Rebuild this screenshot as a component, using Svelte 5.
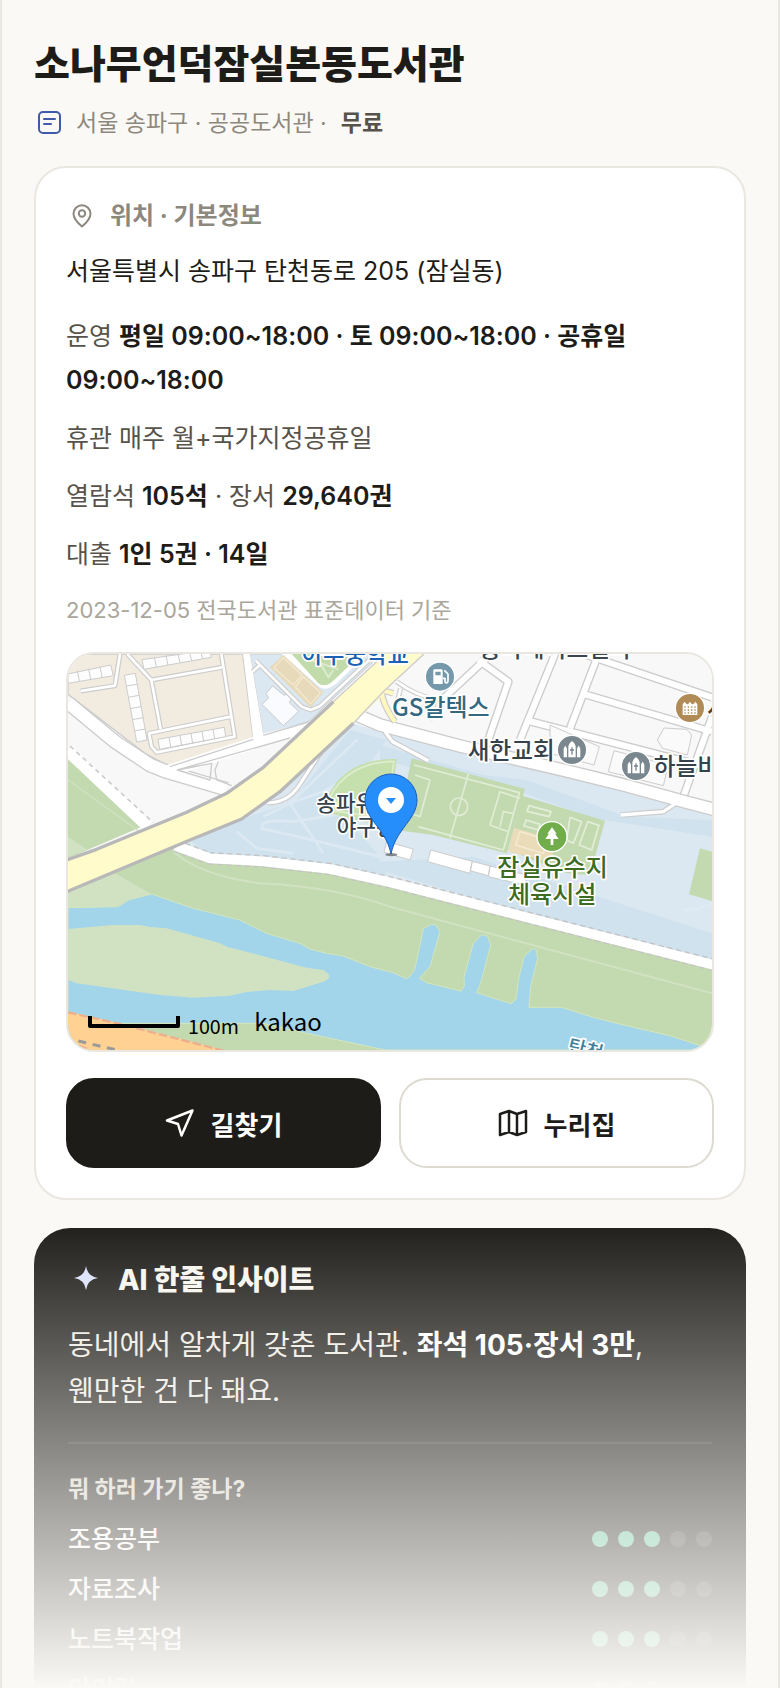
<script>
  const info = [
    [{ t: '운영 ' }, { b: '평일 09:00~18:00 · 토 09:00~18:00 · 공휴일 09:00~18:00' }],
    [{ t: '휴관 매주 월+국가지정공휴일' }],
    [{ t: '열람석 ' }, { b: '105석' }, { t: ' · 장서 ' }, { b: '29,640권' }],
    [{ t: '대출 ' }, { b: '1인 5권 · 14일' }]
  ];
  const uses = [
    { name: '조용공부', score: 3 },
    { name: '자료조사', score: 3 },
    { name: '노트북작업', score: 3 },
    { name: '아이랑', score: 3 }
  ];
  const places = [
    { x: 725, y: 70, size: 70, text: '아주중학교', color: '#1a63b4' },
    { x: 1258, y: 52, size: 71, text: '송파레이크빌라', color: '#3b454e' },
    { x: 996, y: 229, size: 72, text: 'GS칼텍스', color: '#34687f' },
    { x: 1223, y: 357, size: 71, text: '새한교회', color: '#36424b' },
    { x: 1781, y: 405, size: 71, text: '하늘비전', color: '#36424b' },
    { x: 1942, y: 228, size: 68, text: '사랑', color: '#5a4020' },
    { x: 769, y: 512, size: 64, text: '송파유수지', color: '#36424b' },
    { x: 830, y: 585, size: 64, text: '야구장', color: '#36424b' },
    { x: 1312, y: 708, size: 72, text: '잠실유수지', color: '#3d6b22' },
    { x: 1344, y: 789, size: 72, text: '체육시설', color: '#3d6b22' }
  ];
  const minorRoads = [
    'M180 42 L165 137 L62 153',
    'M202 42 L274 120 L302 268',
    'M274 120 L486 82',
    'M484 42 L524 290 L290 337 L275 320 L267 280 L512 230',
    'M577 95 L600 75 L588 62 M600 75 L725 200 L752 210 L780 198 L960 30',
    'M1010 125 Q1065 165 1125 178 L1110 240 M1022 145 L1010 190'
  ];
  const streets = [
    'M1140 185 L1290 45 M1255 60 L1345 125 L1285 300',
    'M1490 30 L1380 300',
    'M1620 30 L1530 265',
    'M1580 45 L1956 172',
    'M1565 160 L1956 275',
    'M1395 240 L1956 385',
    'M1956 230 L1870 470'
  ];
  const footprints = [
    'M24 102 L152 75 L160 107 L24 130Z M52 92 L58 123 M86 86 L92 117 M120 80 L126 112',
    'M246 59 L450 30 L454 52 L252 88Z M283 50 L289 82 M318 46 L324 76 M354 42 L360 69 M390 42 L395 62 M424 42 L428 57',
    'M193 106 L226 100 L261 300 L230 306Z M198 138 L232 133 M204 172 L237 166 M210 206 L243 200 M216 239 L249 233 M222 273 L256 267',
    'M294 298 L493 262 L497 290 L299 328Z M327 292 L332 322 M360 286 L365 316 M393 280 L398 310 M426 274 L431 304 M459 268 L464 297'
  ];
</script>

<main class="page">
  <header>
    <h1>소나무언덕잠실본동도서관</h1>
    <p class="meta">
      <svg class="badge" viewBox="0 0 24 24" aria-hidden="true">
        <rect x="1" y="1" width="21" height="21" rx="4" />
        <path d="M6 8h11M6 13h7" />
      </svg>
      <span>서울 송파구 · 공공도서관 ·</span>
      <strong>무료</strong>
    </p>
  </header>

  <section class="card">
    <h2>
      <svg class="place" viewBox="0 0 20 24" aria-hidden="true">
        <path d="M10 22.500C7 20 1.500 15 1.500 9.700a8.500 8.500 0 0 1 17 0C18.500 15 13 20 10 22.500Z" />
        <circle cx="10" cy="9.500" r="3.200" />
      </svg>
      위치 · 기본정보
    </h2>
    <p class="address">서울특별시 송파구 탄천동로 205 (잠실동)</p>
    <div class="info">
      {#each info as row}
        <p>{#each row as part}{#if part.b}<b>{part.b}</b>{:else}{part.t}{/if}{/each}</p>
      {/each}
    </div>
    <p class="source">2023-12-05 전국도서관 표준데이터 기준</p>

    <div class="map">
      <svg viewBox="24 42 1932 1188" preserveAspectRatio="xMidYMid slice" role="img" aria-label="지도">
        <rect x="24" y="42" width="1932" height="1188" fill="#f8f8f8" />
        <!-- housing blocks and school -->
        <path d="M24 42H548L580 298L330 380L255 340L24 163Z" fill="#f2ece0" stroke="#ccc" stroke-width="4" />
        <path d="M570 42H965L745 245L610 288Z" fill="#dbe8f1" stroke="#ccc" stroke-width="3" />
        <path d="M548 30L580 298L610 286L568 30Z" fill="#fff" />
        <path d="M24 188L165 305L270 375L320 395L500 448" fill="none" stroke="#ccc" stroke-width="45" />
        <path d="M24 188L165 305L270 375L320 395L500 448M320 395L610 300L760 262" fill="none" stroke="#fff" stroke-width="37" />
        <path d="M330 380L580 298M610 286L745 246M352 390L690 294M352 390L455 370L450 420ZM515 437L470 420L465 390L475 365" fill="none" stroke="#ccc" stroke-width="4" />
        <path d="M665 42L780 142Q800 155 830 130L920 42Z" fill="#fff" />
        <path d="M695 42L775 130Q795 145 820 122L905 42Z" fill="#c1dbab" />
        <path d="M725 50L835 88M765 42L805 112L820 90" fill="none" stroke="#dcebcf" stroke-width="6" />
        <path d="M670 45L790 157L752 203L630 82Z" fill="#e7dabb" />
        <path d="M670 53L726 105L700 135L642 83ZM730 110L782 158L752 191L706 141Z" fill="none" stroke="#f4e9d0" stroke-width="4" />
        <path d="M638 138L672 166L685 160L694 175L688 188L716 214L670 257L606 193L626 174L618 160Z" fill="#f9fbfe" stroke="#ccc" stroke-width="3" />
        <g fill="none" stroke-linejoin="round">
          {#each minorRoads as d}<path {d} stroke="#ccc" stroke-width="15" />{/each}
          {#each minorRoads as d}<path {d} stroke="#fff" stroke-width="8" />{/each}
          {#each footprints as d}<path {d} fill="#fdfdfd" stroke="#ccc" stroke-width="3" />{/each}
        </g>

        <!-- eastern streets -->
        <g fill="none">
          {#each streets as d}<path {d} stroke="#ccc" stroke-width="26" />{/each}
          {#each streets as d}<path {d} stroke="#fff" stroke-width="18" />{/each}
          <path d="M1470 255L1618 320L1602 375L1470 340ZM1662 332L1645 395L1810 437L1825 375ZM1812 264L1880 268L1895 285L1882 345L1808 325L1792 300Z" fill="#fafafa" stroke="#ccc" stroke-width="3" />
        </g>

        <!-- sports park -->
        <path d="M880 250L960 275L1240 340L1500 405L1956 525V970L1400 825L990 715L800 680L440 645L350 615L550 535L660 455Z" fill="#dbe8f1" />
        <path d="M690 490L870 270L980 300L930 370L790 450L950 640L980 705L800 680L440 645L390 600L550 535ZM960 315L1270 405L1400 420L1700 530L1956 540V590L1600 535L1380 455L960 360ZM1240 650L1956 880V960L1500 850L960 690V665Z" fill="#d0e2ee" />
        <path d="M893 298L690 490L610 530M690 490L860 430M690 490L790 640M850 520L700 545Q600 535 605 565L800 610L960 650M530 575L590 625L700 640" fill="none" stroke="#dce9f2" stroke-width="8" />
        <path d="M620 488Q680 490 715 440L790 325" fill="none" stroke="#ccc" stroke-width="16" />
        <path d="M620 488Q680 490 715 440L790 325" fill="none" stroke="#fff" stroke-width="9" />
        <path d="M800 480C830 400 900 355 1010 357L985 565L810 520Z" fill="#c5dfad" />
        <path d="M808 476C840 405 910 365 1002 364L975 535L815 512" fill="none" stroke="#deedd0" stroke-width="5" />
        <path d="M1055 355L1395 447L1340 640L1120 585L1010 570Z" fill="#c3d9b0" />
        <path d="M1062 375L1378 458L1330 630L1075 560M1225 402L1170 595M1065 405L1110 420L1080 530L1040 515M1380 475L1320 455L1290 555L1345 575M1358 520L1330 515L1320 560" fill="none" stroke="#e0edd5" stroke-width="5" />
        <circle cx="1197" cy="500" r="26" fill="none" stroke="#e0edd5" stroke-width="5" />
        <path d="M1387 467L1635 542L1590 705L1520 700L1345 630Z" fill="#c3d9b0" />
        <path d="M1407 497L1473 515L1467 530L1401 514ZM1398 540L1440 553L1436 570L1392 558ZM1530 532L1565 545L1540 610L1520 600ZM1583 545L1617 556L1595 630L1558 615Z" fill="none" stroke="#e3eed9" stroke-width="5" />
        <path d="M1362 563L1490 600L1470 665L1345 635Z" fill="#eadbb9" />
        <path d="M1380 575L1465 600L1450 640L1367 615Z" fill="none" stroke="#f5ebd5" stroke-width="4" />
        <path d="M980 605L1060 627L1050 660L972 637ZM1112 630L1237 664L1230 700L1103 665ZM1237 664L1290 678L1285 707L1230 692ZM1290 678L1400 705L1395 735L1285 710Z" fill="#fff" stroke="#ccc" stroke-width="3" />
        <path d="M1920 625L1956 635V783L1887 763Z" fill="#c3d9b0" />
        <path d="M1870 810L1915 805L1956 792" fill="none" stroke="#dfebf3" stroke-width="8" />
        <g fill="none">
          <path d="M975 275L998 305L1105 362M1682 525L1810 515L1855 485" stroke="#ccc" stroke-width="17" />
          <path d="M890 225L960 255L1200 318L1500 388L1700 437L1880 487L1970 510" stroke="#ccc" stroke-width="42" />
          <path d="M890 225L960 255L1200 318L1500 388L1700 437L1880 487L1970 510" stroke="#fff" stroke-width="34" />
          <path d="M975 275L998 305L1105 362M1682 525L1810 515L1855 485" stroke="#fff" stroke-width="10" />
        </g>

        <!-- riverside -->
        <path d="M24 355L245 560L24 655Z" fill="#c3d9b0" />
        <path d="M24 420L235 572" stroke="#d1e2c3" stroke-width="4" />
        <path d="M24 590L80 628L24 652Z" fill="#d1e2c3" />
        <path d="M24 333L262 558" stroke="#fff" stroke-width="36" />
        <path d="M30 318L280 548" stroke="#ccc" stroke-width="5" stroke-dasharray="14 12" />
        <path d="M24 755L340 615L450 655L810 690L990 730L1400 835L1956 985V1230H24Z" fill="#c3d9b0" />
        <path d="M24 755L165 700L275 762L205 795L24 810Z" fill="#d1e2c3" />
        <path d="M340 635Q420 705 600 730Q820 740 990 800L1956 1060" fill="none" stroke="#d1e2c3" stroke-width="6" />
        <path d="M345 617L450 655L610 664L810 687L990 727L1400 832L1970 977" fill="none" stroke="#c4c4c4" stroke-width="38" stroke-dasharray="16 11" />
        <path d="M345 617L450 655L610 664L810 687L990 727L1400 832L1970 977" fill="none" stroke="#fff" stroke-width="29" />
        <path d="M24 803L175 800L205 780L275 762L400 805L540 840L620 880L720 910L750 927L800 940L850 948L930 980L1000 998L1040 1016Q1060 1002 1066 980L1090 866L1115 852L1128 855L1140 875L1110 980L1078 1015L1100 1028L1203 1053L1213 1038L1212 1010L1240 910L1265 884L1283 888L1292 915L1262 1030L1250 1058L1353 1091L1368 1078L1375 1020L1392 950L1418 925L1428 928L1433 955L1412 1040L1407 1102H1505L1600 1132L1700 1157L1830 1187L1922 1217L1940 1230H24Z" fill="#a3d5ea" stroke="#d3e6bd" stroke-width="3" />
        <path d="M24 867L160 855H240L270 861L320 865L480 910L500 920L740 983L790 990Q808 1002 808 1010Q805 1018 790 1025L700 1053L630 1050L560 1056L510 1067L400 1073L300 1065L50 1030L24 1020Z" fill="#d1e2c3" />
        <path d="M180 1150H610L740 1180L985 1232H450Z" fill="#c3d9b0" stroke="#d3e6bd" stroke-width="3" />
        <path d="M24 1115L180 1150L490 1230H24Z" fill="#ffd294" />
        <path d="M24 1117L180 1152L490 1232M24 1205L90 1230" stroke="#eeaf8c" stroke-width="7" fill="none" stroke-dasharray="26 9" />
        <path d="M55 1203L170 1230" stroke="#999" stroke-width="9" stroke-dasharray="24 20" />

        <!-- main road -->
        <path d="M1000 160L965 150Q965 190 1005 245" fill="none" stroke="#ccc" stroke-width="20" />
        <path d="M1000 160L965 150Q965 190 1005 245" fill="none" stroke="#fff7bd" stroke-width="13" />
        <path d="M14 660L110 628L380 517L500 460L610 382L820 185L975 42H1092L975 150L955 180L880 250L660 455L545 537L390 600L14 760Z" fill="#fffbcb" />
        <path d="M820 185L975 42M1092 42L975 150L880 250" fill="none" stroke="#ccc" stroke-width="4" />
        <path d="M14 662L110 628L380 517L500 460L610 382L820 185M880 250L660 455L545 537L390 600L14 758" fill="none" stroke="#b8b8b8" stroke-width="10" />

        <g class="labels">
          {#each places as p}
            <text x={p.x} y={p.y} font-size={p.size} fill={p.color}>{p.text}</text>
          {/each}
          <text x="1520" y="1236" font-size="58" fill="#3d7f9c" transform="rotate(14 1520 1236)">탄천</text>
        </g>

        <!-- place markers -->
        <g stroke="#fff" stroke-width="4">
          <circle cx="1140" cy="110" r="44" fill="#7599ab" />
          <circle cx="1536" cy="330" r="44" fill="#7a878f" />
          <circle cx="1728" cy="378" r="44" fill="#7a878f" />
          <circle cx="1890" cy="204" r="44" fill="#b18b56" />
          <circle cx="1476" cy="590" r="45" fill="#72ad4c" />
        </g>
        <path d="M1120 92Q1120 88 1124 88H1144Q1148 88 1148 92V132H1120Z" fill="#fff" />
        <path d="M1126 95H1142V106H1126Z" fill="#7599ab" />
        <path d="M1148 115H1155V126Q1163 133 1164 122V102L1153 91" fill="none" stroke="#fff" stroke-width="5" />
        {#each [[1536, 330], [1728, 378]] as c}
          <g transform="translate({c[0]} {c[1]})">
            <path d="M-11 22V-12Q-8 -22 0 -27Q8 -22 11 -12V22ZM-25 22V-4Q-23 -10 -20 -13Q-17 -10 -15 -4V22ZM25 22V-4Q23 -10 20 -13Q17 -10 15 -4V22Z" fill="#fff" />
            <path d="M0 -8V14M-6 0H6" stroke="#7a878f" stroke-width="4" />
          </g>
        {/each}
        <path d="M1868 225V193L1874 185L1880 193H1884L1890 185L1896 193H1900L1906 185L1912 193V225Z" fill="#fff" />
        <path d="M1873 201H1909M1873 210H1909M1873 219H1909" stroke="#b18b56" stroke-width="4" stroke-dasharray="4 6" />
        <path d="M1476 562L1490 581H1485L1496 597H1480V615H1472V597H1456L1467 581H1462Z" fill="#fff" />

        <!-- library pin -->
        <ellipse cx="994" cy="644" rx="18" ry="5" fill="#555" opacity=".65" />
        <path d="M993 642C985 600 961 572 940 543C923 520 915 500 915 480A78 78 0 0 1 1071 480C1071 500 1063 520 1046 543C1025 572 1001 600 993 642Z" fill="#258efb" stroke="#1b5fbe" stroke-width="3" />
        <circle cx="993" cy="480" r="39" fill="#fff" />
        <path d="M978 474H1008L993 492Z" fill="#258efb" />

        <!-- scale -->
        <path d="M90 1128V1158H354V1128" fill="none" stroke="#000" stroke-width="12" />
        <text class="scale" x="384" y="1181" font-size="59">100m</text>
        <text class="brand" x="583" y="1174" font-size="72">kakao</text>
      </svg>
    </div>

    <div class="actions">
      <button class="primary" type="button">
        <svg viewBox="0 0 30 30" aria-hidden="true"><path d="M27.500 2.500L2 12.500L13 16L16.500 27.500Z" /></svg>
        길찾기
      </button>
      <button type="button">
        <svg viewBox="0 0 30 30" aria-hidden="true"><path d="M2 6L11 3L19 6L28 3V24L19 27L11 24L2 27ZM11 3V24M19 6V27" /></svg>
        누리집
      </button>
    </div>
  </section>

  <section class="insight">
    <h2>
      <svg viewBox="0 0 24 28" aria-hidden="true"><path d="M12 0Q13.500 10.500 24 12Q13.500 13.500 12 24Q10.500 13.500 0 12Q10.500 10.500 12 0Z" /></svg>
      AI 한줄 인사이트
    </h2>
    <p class="summary">동네에서 알차게 갖춘 도서관. <b>좌석 105·장서 3만</b>, 웬만한 건 다 돼요.</p>
    <hr />
    <h3>뭐 하러 가기 좋나?</h3>
    <ul>
      {#each uses as use}
        <li>
          <span>{use.name}</span>
          <span class="dots">{#each Array(5) as _, i}<i class:on={i < use.score}></i>{/each}</span>
        </li>
      {/each}
    </ul>
  </section>
  <div class="fade"></div>
</main>

<style>
  :global(body) {
    margin: 0;
    background: #faf9f6;
  }
  .page {
    position: relative;
    box-sizing: border-box;
    height: 100vh;
    overflow: hidden;
    padding: 38px 32px 0;
    border: solid #e9e7e1;
    border-width: 0 2px;
    background: #faf9f6;
    color: #1e1c18;
    font-family: Inter, 'Noto Sans CJK KR', sans-serif;
    word-break: keep-all;
  }
  h1, h2, h3, p, ul {
    margin: 0;
    padding: 0;
  }
  svg {
    flex: none;
    fill: none;
    stroke-linecap: round;
    stroke-linejoin: round;
  }
  h1 {
    font-size: 39px;
    line-height: 52px;
    font-weight: 800;
  }
  .meta {
    display: flex;
    align-items: center;
    gap: 14px;
    margin-top: 14px;
    padding-left: 4px;
    font-size: 23px;
    line-height: 38px;
    color: #8d887d;
  }
  .meta strong {
    color: #57534a;
    font-weight: 700;
  }
  .badge {
    width: 24px;
    height: 24px;
    stroke: #3f5bab;
    stroke-width: 2;
  }
  .card {
    margin-top: 24px;
    padding: 30px;
    border: 2px solid #eae7e1;
    border-radius: 32px;
    background: #fff;
  }
  .card h2 {
    display: flex;
    align-items: center;
    gap: 18px;
    padding-left: 6px;
    font-size: 24px;
    line-height: 36px;
    font-weight: 700;
    color: #8d887d;
  }
  .place {
    width: 20px;
    height: 24px;
    stroke: #8d887d;
    stroke-width: 2;
  }
  .address {
    margin-top: 16px;
    font-size: 25px;
    line-height: 42px;
  }
  .info {
    display: grid;
    gap: 14px;
    margin-top: 22px;
    font-size: 25px;
    line-height: 44px;
    color: #57534a;
  }
  .info b {
    font-weight: 600;
    color: #1e1c18;
  }
  .source {
    margin-top: 18px;
    font-size: 22px;
    line-height: 32px;
    color: #aaa69b;
  }
  .map {
    margin-top: 26px;
    height: 396px;
    border: 2px solid #eae7e1;
    border-radius: 28px;
    overflow: hidden;
  }
  .map svg {
    display: block;
    width: 100%;
    height: 100%;
    stroke-linecap: butt;
  }
  .labels text {
    font-family: 'Noto Sans CJK KR', sans-serif;
    font-weight: 500;
    stroke: #fff;
    stroke-width: 10;
    paint-order: stroke;
  }
  .scale,
  .brand {
    font-family: 'Noto Sans CJK KR', sans-serif;
    font-weight: 400;
    fill: #000;
  }
  .actions {
    display: grid;
    grid-template-columns: 1fr 1fr;
    gap: 18px;
    margin-top: 26px;
  }
  button {
    display: flex;
    align-items: center;
    justify-content: center;
    gap: 16px;
    height: 90px;
    border: 2px solid #dcdad1;
    border-radius: 28px;
    background: #fff;
    color: #1e1c18;
    font: 700 26px Inter, 'Noto Sans CJK KR', sans-serif;
  }
  button svg {
    width: 30px;
    height: 30px;
    stroke: currentColor;
    stroke-width: 2.5;
  }
  button.primary {
    border-color: #1e1c18;
    background: #1e1c18;
    color: #fff;
  }
  .insight {
    margin-top: 28px;
    padding: 30px 34px;
    border-radius: 36px;
    background: #1e1c18;
    color: #fff;
  }
  .insight h2 {
    display: flex;
    align-items: center;
    gap: 20px;
    padding-left: 6px;
    font-size: 28px;
    line-height: 44px;
    font-weight: 800;
    color: #f7f5ef;
  }
  .insight h2 svg {
    width: 24px;
    height: 28px;
    fill: #dbe2fc;
  }
  .summary {
    margin-top: 20px;
    font-size: 28px;
    line-height: 46px;
    color: #efece4;
  }
  .summary b {
    font-weight: 700;
    color: #fff;
  }
  hr {
    height: 2px;
    margin: 28px 0;
    border: 0;
    background: #33312d;
  }
  h3 {
    font-size: 23px;
    line-height: 34px;
    font-weight: 700;
    color: #d8d4c8;
  }
  ul {
    margin-top: 8px;
    list-style: none;
  }
  li {
    display: flex;
    align-items: center;
    justify-content: space-between;
    font-size: 25px;
    line-height: 50px;
    font-weight: 500;
  }
  .dots {
    display: flex;
    gap: 10px;
  }
  .dots i {
    width: 16px;
    height: 16px;
    border-radius: 50%;
    background: #3c3a36;
  }
  .dots .on {
    background: #62c49e;
  }
  .fade {
    position: absolute;
    inset: auto 0 0;
    height: 472px;
    background: linear-gradient(rgba(250, 249, 246, 0), #faf9f6);
    pointer-events: none;
  }
</style>
